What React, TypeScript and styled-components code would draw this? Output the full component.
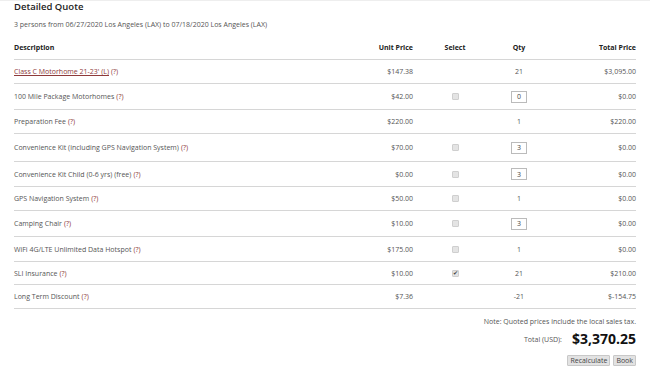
import styled, { createGlobalStyle } from "styled-components";

const GlobalStyle = createGlobalStyle`
  body {
    margin: 0;
    background: #fff;
    font-family: "Open Sans", "Liberation Sans", sans-serif;
    color: #555;
  }
`

const Page = styled.div`
  width: 650px;
  height: 371px;
  box-sizing: border-box;
  border-top: 1px solid #eee;
  padding: 0 14px;
  overflow: hidden;
`

const Title = styled.h2`
  margin: 0;
  font-size: 9.5px;
  line-height: 12px;
  font-weight: 600;
  color: #222;
`

const Subtitle = styled.p`
  margin: 7px 0 6px;
  font-size: 7px;
  line-height: 10px;
  color: #555;
`

const Row = styled.div<{ height: number; head?: boolean }>`
  display: grid;
  grid-template-columns: 1fr 80px 84px 44px 95px;
  align-items: center;
  box-sizing: border-box;
  height: ${props => props.height}px;
  border-bottom: 1px solid #d6d6d6;
  font-size: 7px;
  font-weight: ${props => (props.head ? 700 : 400)};
  color: ${props => (props.head ? "#222" : "#555")};
`

const Cell = styled.div<{ align: "left" | "center" | "right" }>`
  text-align: ${props => props.align};
  display: flex;
  justify-content: ${props =>
    props.align === "left" ? "flex-start" : props.align === "right" ? "flex-end" : "center"};
  align-items: center;
`

const ItemLink = styled.a`
  color: #8e3a3a;
  text-decoration: underline;
`

const Help = styled.span`
  color: #8e3a3a;
  margin-left: 2px;
`

const Check = styled.span`
  width: 5px;
  height: 5px;
  border: 1px solid #cfcfcf;
  border-radius: 1px;
  background: #e4e4e4;
  display: flex;
  align-items: center;
  justify-content: center;
  font-size: 6px;
  line-height: 5px;
  color: #444;
`

const QtyBox = styled.span`
  width: 14px;
  height: 10px;
  border: 1px solid #bbb;
  display: flex;
  align-items: center;
  justify-content: center;
  font-size: 7px;
  color: #444;
`

const Footer = styled.div`
  display: flex;
  flex-direction: column;
  align-items: flex-end;
`

const Note = styled.div`
  margin-top: 8px;
  font-size: 7px;
  line-height: 10px;
  color: #555;
`

const TotalLine = styled.div`
  display: flex;
  align-items: center;
  gap: 10px;
  margin-top: 2px;
`

const TotalLabel = styled.span`
  font-size: 7px;
  color: #555;
`

const TotalValue = styled.span`
  font-size: 14px;
  line-height: 20px;
  font-weight: 700;
  color: #111;
`

const Buttons = styled.div`
  display: flex;
  gap: 3px;
  margin-top: 6px;
`

const Button = styled.button`
  font-family: inherit;
  font-size: 7px;
  line-height: 9px;
  padding: 0 2px;
  color: #444;
  background: #e2e2e2;
  border: 1px solid #c8c8c8;
  border-radius: 1px;
`

type Item = {
  name: string;
  link?: boolean;
  unit: string;
  select?: "off" | "on";
  qty: string;
  input?: boolean;
  total: string;
  height: number;
}

const items: Item[] = [
  { name: "Class C Motorhome 21-23' (L)", link: true, unit: "$147.38", qty: "21", total: "$3,095.00", height: 24 },
  { name: "100 Mile Package Motorhomes", unit: "$42.00", select: "off", qty: "0", input: true, total: "$0.00", height: 26 },
  { name: "Preparation Fee", unit: "$220.00", qty: "1", total: "$220.00", height: 24 },
  { name: "Convenience Kit (including GPS Navigation System)", unit: "$70.00", select: "off", qty: "3", input: true, total: "$0.00", height: 28 },
  { name: "Convenience Kit Child (0-6 yrs) (free)", unit: "$0.00", select: "off", qty: "3", input: true, total: "$0.00", height: 25 },
  { name: "GPS Navigation System", unit: "$50.00", select: "off", qty: "1", total: "$0.00", height: 24 },
  { name: "Camping Chair", unit: "$10.00", select: "off", qty: "3", input: true, total: "$0.00", height: 26 },
  { name: "WiFi 4G/LTE Unlimited Data Hotspot", unit: "$175.00", select: "off", qty: "1", total: "$0.00", height: 25 },
  { name: "SLI Insurance", unit: "$10.00", select: "on", qty: "21", total: "$210.00", height: 23 },
  { name: "Long Term Discount", unit: "$7.36", qty: "-21", total: "$-154.75", height: 24 },
]

const App = () => {
  return <Page>
    <GlobalStyle/>
    <Title>Detailed Quote</Title>
    <Subtitle>3 persons from 06/27/2020 Los Angeles (LAX) to 07/18/2020 Los Angeles (LAX)</Subtitle>
    <Row height={24} head>
      <Cell align="left">Description</Cell>
      <Cell align="right">Unit Price</Cell>
      <Cell align="center">Select</Cell>
      <Cell align="center">Qty</Cell>
      <Cell align="right">Total Price</Cell>
    </Row>
    {items.map(item => (
      <Row key={item.name} height={item.height}>
        <Cell align="left">
          <span>
            {item.link ? <ItemLink>{item.name}</ItemLink> : item.name}
            <Help>(?)</Help>
          </span>
        </Cell>
        <Cell align="right">{item.unit}</Cell>
        <Cell align="center">
          {item.select && <Check>{item.select === "on" ? "✔" : ""}</Check>}
        </Cell>
        <Cell align="center">
          {item.input ? <QtyBox>{item.qty}</QtyBox> : item.qty}
        </Cell>
        <Cell align="right">{item.total}</Cell>
      </Row>
    ))}
    <Footer>
      <Note>Note: Quoted prices include the local sales tax.</Note>
      <TotalLine>
        <TotalLabel>Total (USD):</TotalLabel>
        <TotalValue>$3,370.25</TotalValue>
      </TotalLine>
      <Buttons>
        <Button>Recalculate</Button>
        <Button>Book</Button>
      </Buttons>
    </Footer>
  </Page>
}

export default App;
